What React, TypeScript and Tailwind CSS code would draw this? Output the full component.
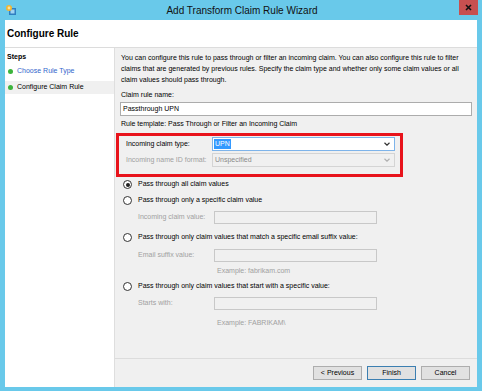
import React from "react";

const Chevron = ({ color }: { color: string }) => (
  <svg width="6" height="4" viewBox="0 0 6 4" className="shrink-0">
    <polyline points="0.5,0.8 3,3.2 5.5,0.8" fill="none" stroke={color} strokeWidth="1.2" />
  </svg>
);

const Radio = ({ checked, label }: { checked?: boolean; label: string }) => (
  <div className="flex items-center h-[11px] ml-[3px]">
    <div className="w-[9px] h-[9px] rounded-full border border-[#333] bg-white flex items-center justify-center shrink-0">
      {checked && <div className="w-[4px] h-[4px] rounded-full bg-[#222]" />}
    </div>
    <span className="ml-[6px] text-[#000]">{label}</span>
  </div>
);

const DisabledField = ({ label }: { label: string }) => (
  <div className="flex items-center h-[13px] ml-[18px]">
    <span className="w-[76px] text-[#a0a0a0]">{label}</span>
    <div className="w-[163px] h-[13px] border border-[#c8c8c8] bg-[#f0f0f0]" />
  </div>
);

const Button = ({ label, primary }: { label: string; primary?: boolean }) => (
  <div
    className={
      "w-[49px] h-[14px] flex items-center justify-center bg-[#e1e1e1] border " +
      (primary ? "border-[#3c7fb1]" : "border-[#adadad]")
    }
  >
    {label}
  </div>
);

export default function App() {
  return (
    <div
      className="w-[482px] h-[391px] bg-[#69c9ea] flex flex-col px-[5px] pb-[4px] text-[7px] text-black"
      style={{ fontFamily: '"Liberation Sans", Arial, sans-serif' }}
    >
      {/* title bar */}
      <div className="h-[20px] flex items-center shrink-0">
        <svg width="12" height="12" viewBox="0 0 12 12" className="shrink-0">
          <rect x="4" y="4" width="7" height="7" fill="#2f7fc1" />
          <rect x="5.5" y="5.5" width="4" height="4" fill="#9fd3f3" />
          <circle cx="4" cy="4" r="3" fill="#f2b632" />
          <circle cx="4" cy="4" r="1.4" fill="#fbe29a" />
        </svg>
        <div className="flex-1 text-center text-[10px] text-[#111] pl-[8px]">Add Transform Claim Rule Wizard</div>
        <div className="w-[19px] h-[15px] -mr-[1px] self-start bg-[#c75050] flex items-center justify-center">
          <svg width="7" height="7" viewBox="0 0 7 7">
            <path d="M1 1 L6 6 M6 1 L1 6" stroke="#111" strokeWidth="1.6" />
          </svg>
        </div>
      </div>

      <div className="flex-1 bg-white flex flex-col">
        {/* header */}
        <div className="h-[28px] flex items-center pl-[2px] border-b border-[#dcdcdc] shrink-0">
          <span className="text-[10px] font-bold">Configure Rule</span>
        </div>

        <div className="flex-1 flex">
          {/* steps */}
          <div className="w-[110px] border-r border-[#dedede] bg-white pt-[3px]">
            <div className="h-[11px] leading-[11px] pl-[2px] font-bold">Steps</div>
            <div className="h-[13px] mt-[3px] flex items-center pl-[3px]">
              <div className="w-[5px] h-[5px] rounded-full bg-[#3cb43c]" />
              <span className="ml-[4px] text-[#3366cc]">Choose Rule Type</span>
            </div>
            <div className="h-[13px] mt-[3px] flex items-center pl-[3px] bg-[#f0f0f0]">
              <div className="w-[5px] h-[5px] rounded-full bg-[#3cb43c]" />
              <span className="ml-[4px]">Configure Claim Rule</span>
            </div>
          </div>

          {/* right side */}
          <div className="flex-1 flex flex-col bg-[#f0f0f0]">
            <div className="flex-1 border-b border-[#dcdcdc] pt-[4px] pl-[5px] pr-[5px] flex flex-col">
              <div className="leading-[11px] pl-[1px] whitespace-nowrap">
                <div>You can configure this rule to pass through or filter an incoming claim. You can also configure this rule to filter</div>
                <div>claims that are generated by previous rules. Specify the claim type and whether only some claim values or all</div>
                <div>claim values should pass through.</div>
              </div>
              <div className="leading-[11px] pl-[1px] mt-[4px]">Claim rule name:</div>
              <div className="h-[14px] mt-[2px] bg-white border border-[#acacac] flex items-center pl-[2px]">Passthrough UPN</div>
              <div className="leading-[11px] pl-[1px] mt-[2px]">Rule template: Pass Through or Filter an Incoming Claim</div>

              <div className="w-[287px] -ml-[4px] mt-[4px] border-[3px] border-[#e8131b] pt-[1px] pb-[7px] pl-[7px] pr-[5px] flex flex-col gap-[2px]">
                <div className="flex items-center h-[14px]">
                  <span className="w-[86px]">Incoming claim type:</span>
                  <div className="flex-1 h-[14px] bg-white border border-[#7eb4ea] flex items-center pl-[1px] pr-[4px]">
                    <span className="bg-[#3399ff] text-white px-[1px] leading-[10px]">UPN</span>
                    <div className="flex-1" />
                    <Chevron color="#333" />
                  </div>
                </div>
                <div className="flex items-center h-[14px]">
                  <span className="w-[86px] text-[#a0a0a0]">Incoming name ID format:</span>
                  <div className="flex-1 h-[14px] bg-[#f0f0f0] border border-[#d4d4d4] flex items-center pl-[2px] pr-[4px]">
                    <span className="text-[#8a8a8a]">Unspecified</span>
                    <div className="flex-1" />
                    <Chevron color="#b0b0b0" />
                  </div>
                </div>
              </div>

              <div className="mt-[2px]">
                <Radio checked label="Pass through all claim values" />
              </div>
              <div className="mt-[5px]">
                <Radio label="Pass through only a specific claim value" />
              </div>
              <div className="mt-[5px]">
                <DisabledField label="Incoming claim value:" />
              </div>
              <div className="mt-[8px]">
                <Radio label="Pass through only claim values that match a specific email suffix value:" />
              </div>
              <div className="mt-[6px]">
                <DisabledField label="Email suffix value:" />
              </div>
              <div className="leading-[11px] mt-[3px] ml-[97px] text-[#a0a0a0]">Example: fabrikam.com</div>
              <div className="mt-[5px]">
                <Radio label="Pass through only claim values that start with a specific value:" />
              </div>
              <div className="mt-[5px]">
                <DisabledField label="Starts with:" />
              </div>
              <div className="leading-[11px] mt-[7px] ml-[97px] text-[#a0a0a0]">Example: FABRIKAM\</div>
            </div>

            <div className="h-[28px] shrink-0 flex items-center justify-end gap-[5px] pr-[7px]">
              <Button label="< Previous" />
              <Button label="Finish" primary />
              <Button label="Cancel" />
            </div>
          </div>
        </div>
      </div>
    </div>
  );
}
